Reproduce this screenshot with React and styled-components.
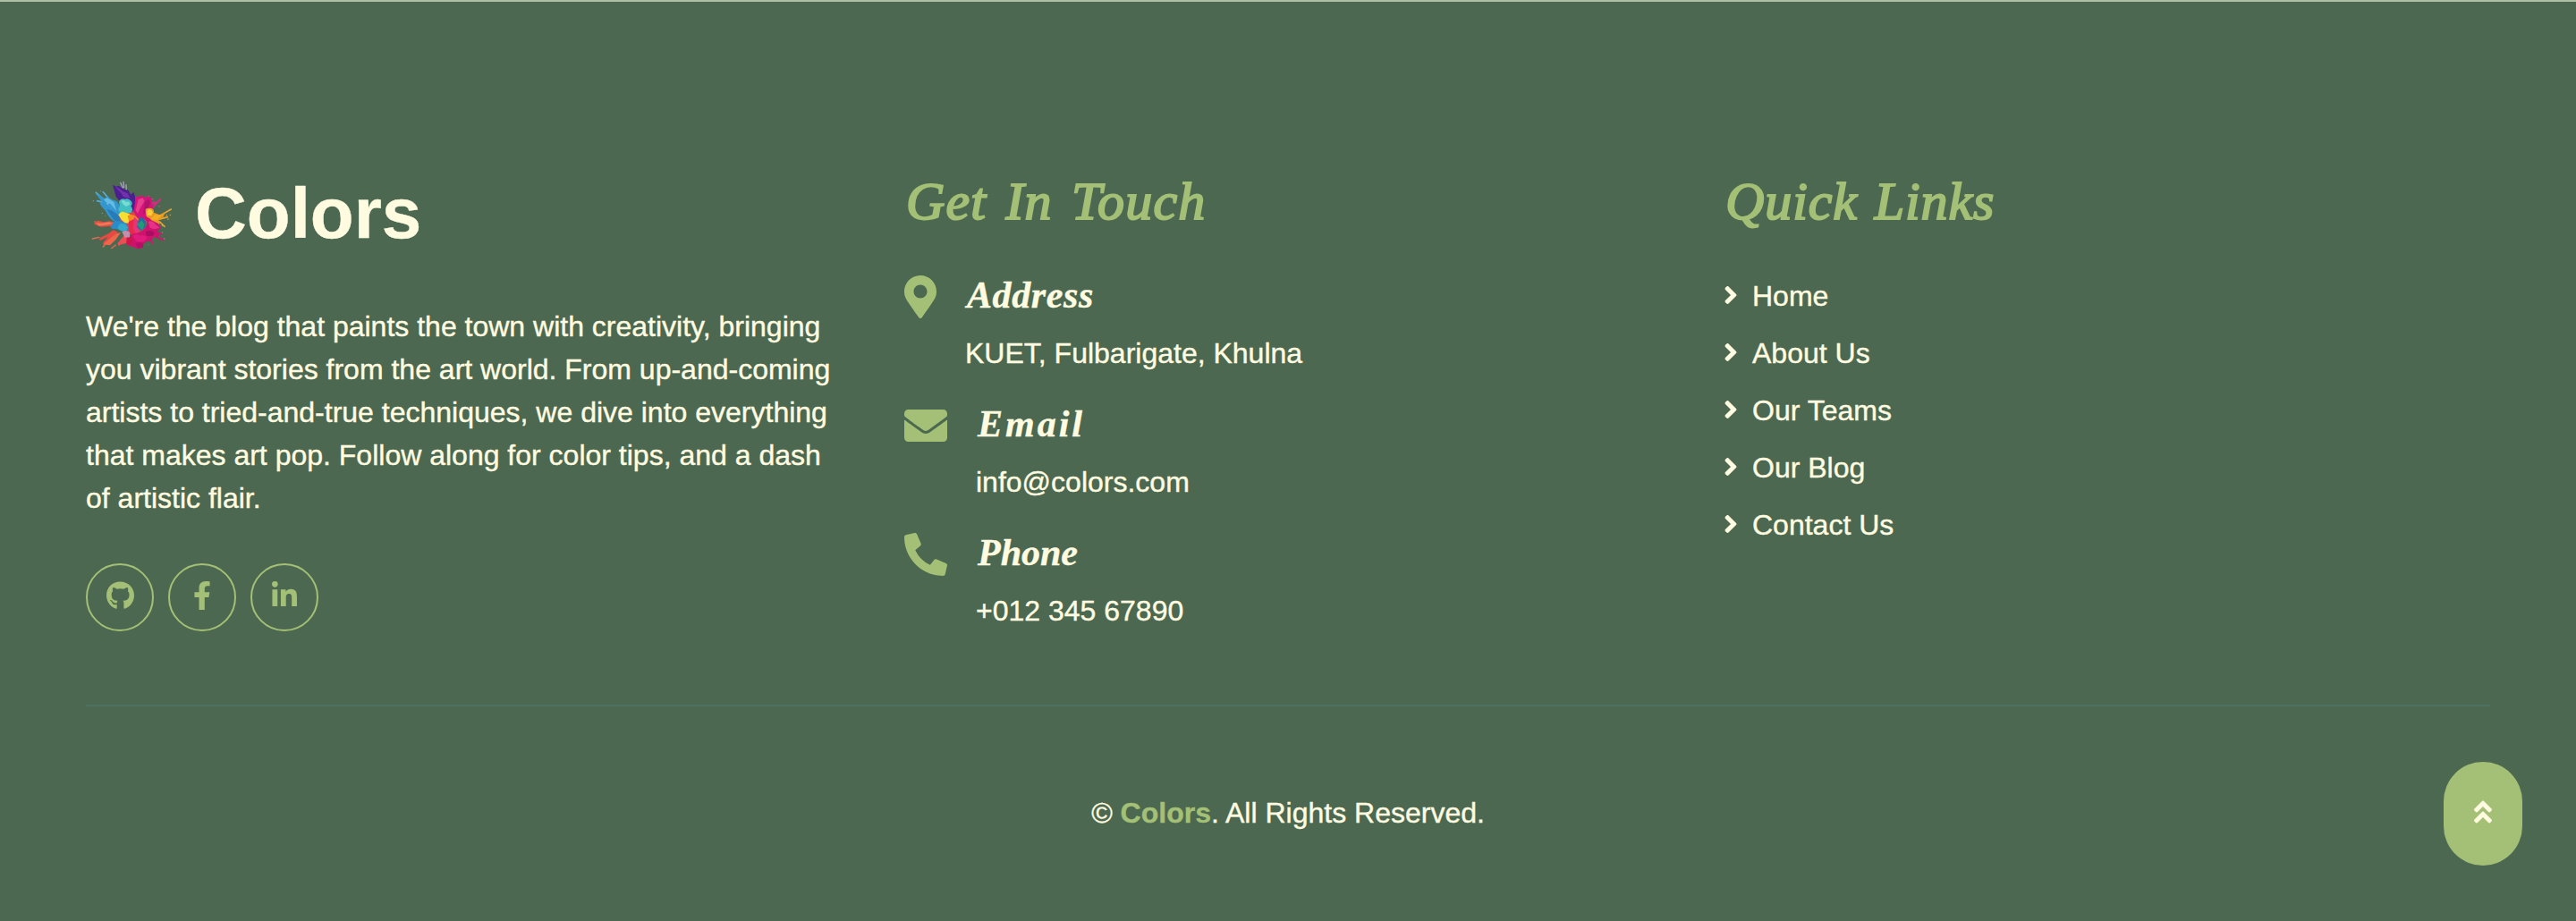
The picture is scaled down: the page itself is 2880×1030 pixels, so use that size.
import React from "react";
import styled, { createGlobalStyle } from "styled-components";
import {
  FaGithub,
  FaFacebookF,
  FaLinkedinIn,
  FaMapMarkerAlt,
  FaEnvelope,
  FaPhoneAlt,
  FaAngleRight,
  FaAngleDoubleUp,
} from "react-icons/fa";

const colors = {
  background: "#4c6850",
  cream: "#fefbe0",
  accent: "#a3c076",
  rule: "#4d7063",
  edge: "#adbfa5",
};

const GlobalStyle = createGlobalStyle`
  * { box-sizing: border-box; }
  body {
    margin: 0;
    background: ${colors.background};
    color: ${colors.cream};
    font: 32px/48px "Liberation Sans", Arial, sans-serif;
    -webkit-text-stroke: 0.4px currentColor;
  }
  h2, h3, p, ul { margin: 0; padding: 0; }
  a { color: inherit; text-decoration: none; }
  svg { display: block; flex: none; }
`;

const Footer = styled.footer`
  height: 1030px;
  padding: 187px 96px 0;
  border-top: 2px solid ${colors.edge};
  overflow: hidden;
`;

const Columns = styled.div`
  display: grid;
  grid-template-columns: 857px 858px 1fr;
  column-gap: 58px;
  height: 599px;
`;

const Brand = styled.a`
  display: flex;
  align-items: center;
  gap: 12px;
  height: 100px;
  margin: 1px 0 51px -6px;
`;

const BrandName = styled.span`
  font-size: 80px;
  font-weight: 700;
  line-height: 96px;
  padding-bottom: 3px;
`;

const Socials = styled.div`
  display: flex;
  gap: 16px;
  margin-top: 49px;
`;

const SocialLink = styled.a`
  display: flex;
  align-items: center;
  justify-content: center;
  width: 76px;
  height: 76px;
  padding-bottom: 4px;
  border: 2px solid ${colors.accent};
  border-radius: 50%;
  color: ${colors.accent};
`;

const Glyph = styled.span`
  flex: none;
  width: ${(p) => p.$width}px;
  height: ${(p) => p.$height || 32}px;

  svg {
    width: 100%;
    height: 100%;
    stroke-width: 0;
  }
`;

const Script = styled.h2`
  font-family: "Lucida Calligraphy", "Apple Chancery", "Liberation Serif", serif;
  font-style: italic;
  font-weight: 400;
  font-size: 60px;
  line-height: 72px;
  padding-left: 2px;
  color: ${colors.accent};
  -webkit-text-stroke: 2px ${colors.accent};
  letter-spacing: ${(p) => p.$tracking}px;
  word-spacing: ${(p) => p.$words}px;
`;

const Contacts = styled.div`
  display: flex;
  flex-direction: column;
  gap: 30px;
  margin-top: 44px;
`;

const Contact = styled.div`
  display: flex;
  gap: 32px;

  ${Glyph} {
    margin-top: 3px;
    color: ${colors.accent};
  }
`;

const ContactTitle = styled.h3`
  font-family: "Lucida Calligraphy", "Apple Chancery", "Liberation Serif", serif;
  font-style: italic;
  font-weight: 700;
  font-size: 42px;
  line-height: 50px;
  margin-bottom: 16px;
  padding-left: 2px;
  letter-spacing: ${(p) => p.$tracking}px;
`;

const Links = styled.ul`
  display: flex;
  flex-direction: column;
  gap: 16px;
  margin-top: 46px;
  list-style: none;
`;

const QuickLink = styled.a`
  display: flex;
  align-items: center;
  gap: 16px;

  ${Glyph} { margin-bottom: 2px; }
`;

const Legal = styled.div`
  padding-top: 95px;
  border-top: 2px solid ${colors.rule};
  text-align: center;

  a {
    color: ${colors.accent};
    font-weight: 700;
  }
`;

const BackToTop = styled.a`
  position: fixed;
  right: 60px;
  bottom: 62px;
  display: flex;
  align-items: center;
  justify-content: center;
  width: 88px;
  height: 116px;
  padding-bottom: 4px;
  border-radius: 44px;
  background: ${colors.accent};
  color: ${colors.cream};
`;

function Splash() {
  return (
    <svg width="116" height="100" viewBox="0 0 348 300" aria-hidden="true">
      <g fill="none" strokeLinecap="round">
        <path d="M52 76 L82 102 M76 74 L98 100 M56 104 L80 110" stroke="#58aed4" strokeWidth="5" />
        <path d="M134 43 L142 60 M144 40 L146 58 M153 50 L154 68" stroke="#a9a4bd" strokeWidth="4" />
        <path d="M232 114 L250 108 M242 120 L266 102 M238 130 L268 98" stroke="#d52c83" strokeWidth="6" />
        <path d="M262 156 L304 132 M262 166 L292 158 M266 174 L282 190" stroke="#e7a232" strokeWidth="5" />
        <path d="M246 220 L276 234 M244 210 L270 214 M234 234 L242 246" stroke="#ce176e" strokeWidth="6" />
        <path d="M40 231 L62 226 M48 173 L66 186 M76 258 L86 246 M118 252 L104 263" stroke="#e36d55" strokeWidth="4" />
      </g>
      <path d="M108 50 L120 56 128 53 143 64 160 68 169 83 178 74 183 89 185 128 172 141 144 122 128 101 119 90z" fill="#4c1f91" />
      <path d="M116 57 L135 76 144 91 167 95 158 79 141 71 127 60z" fill="#7133aa" />
      <path d="M50 79 L66 86 78 96 89 90 105 99 121 105 133 122 139 145 148 177 128 179 106 169 93 154 82 135 70 122 64 111 74 110z" fill="#3396cf" />
      <path d="M63 83 L91 113 118 149 101 125 84 112 100 114 121 139 112 108 90 94 78 99z" fill="#64bce2" />
      <path d="M88 132 L107 137 137 159 131 179 111 167z" fill="#287bb9" />
      <path d="M129 150 L160 140 205 140 225 165 215 205 170 215 145 205z" fill="#d8434f" />
      <path d="M186 91 L207 86 219 94 224 87 240 96 238 118 247 119 237 137 224 145 219 167 191 162 178 139z" fill="#d51479" />
      <path d="M194 99 L209 94 214 105 200 129 192 146 185 136z" fill="#e53f91" />
      <path d="M216 107 L228 98 234 108 226 133 210 149z" fill="#ae146a" />
      <path d="M129 105 Q137 93 148 98 Q160 94 168 103 Q178 112 169 122 Q179 132 170 143 L158 146 143 140 133 143 126 131 132 123z" fill="#42bfc0" />
      <path d="M136 105 Q146 97 153 108 Q166 102 165 116 L153 123 144 116z" fill="#77ddd2" />
      <path d="M218 137 Q216 127 231 128 Q247 127 246 143 L266 151 285 142 277 159 261 165 267 180 253 187 231 173 220 153z" fill="#e89924" />
      <path d="M223 139 Q231 124 243 141 L239 153 224 153z" fill="#f6cd35" />
      <path d="M248 151 L273 151 258 168 236 166z" fill="#f3ad22" />
      <path d="M46 176 L58 170 79 175 96 172 120 176 136 187 124 196 96 189 71 191 48 184z" fill="#df5140" />
      <path d="M52 178 L73 179 95 175 112 181 92 184 61 188z" fill="#f1765a" />
      <path d="M61 230 L95 213 110 202 126 209 110 223 92 237 77 255 76 244 93 224 66 237z" fill="#e84942" />
      <path d="M76 250 L98 231 120 214 135 210 119 233 99 253z" fill="#ef674b" />
      <path d="M124 247 L146 220 164 222 153 246 137 250 128 255z" fill="#eb4d54" />
      <path d="M111 174 L132 172 156 178 159 204 139 206 121 198 108 199 101 192z" fill="#278cc8" />
      <path d="M132 181 Q150 177 159 193 L153 205 136 204 124 195z" fill="#35a9ca" />
      <path d="M127 151 Q135 137 146 141 L164 148 178 158 166 179 149 178 137 167z" fill="#f4df32" />
      <path d="M158 154 Q174 145 188 158 L200 172 189 194 166 186z" fill="#f58a22" />
      <path d="M161 174 L181 164 201 173 209 190 197 209 178 223 164 210z" fill="#e7294c" />
      <path d="M180 157 L194 171 202 202 188 216 176 198z" fill="#e6347a" />
      <path d="M196 160 Q211 158 218 172 L218 193 203 205 190 192z" fill="#246ba4" />
      <path d="M190 184 L205 169 215 183 207 203z" fill="#239a77" />
      <path d="M215 158 Q226 156 238 169 L261 180 269 194 257 206 267 215 258 226 245 225 236 240 223 239 209 250 210 261 190 264 173 257 155 252 160 228 174 215 199 210 219 194 225 181z" fill="#ce126d" />
      <path d="M227 173 Q245 169 251 183 L266 194 248 199 233 194z" fill="#e63286" />
      <path d="M174 221 Q187 211 198 220 Q216 216 223 226 L214 240 190 242z" fill="#e11b7b" />
      <path d="M218 207 Q240 198 248 213 L242 222 222 222z" fill="#a70f62" />
      <path d="M155 225 L171 220 176 233 169 251 154 249z" fill="#cc164b" />
      <path d="M184 247 Q197 238 211 248 L209 260 193 263z" fill="#b90e65" />
      <path d="M139 208 Q154 199 166 210 L165 226 149 227z" fill="#bd91ae" />
      <g fill="#e8bd52">
        <circle cx="289" cy="152" r="2" /><circle cx="301" cy="151" r="2" />
        <circle cx="294" cy="165" r="2" /><circle cx="274" cy="186" r="2" />
      </g>
      <g fill="#d66a91">
        <circle cx="241" cy="98" r="2" /><circle cx="229" cy="88" r="1.5" />
        <circle cx="264" cy="122" r="2" /><circle cx="274" cy="210" r="2" />
        <circle cx="281" cy="231" r="2.5" /><circle cx="228" cy="251" r="1.5" />
      </g>
      <g fill="#78a8ba">
        <circle cx="43" cy="104" r="2" /><circle cx="73" cy="145" r="2" />
        <circle cx="83" cy="154" r="1.5" /><circle cx="68" cy="71" r="1.5" />
      </g>
    </svg>
  );
}

const socials = [
  { label: "GitHub", Icon: FaGithub, width: 31 },
  { label: "Facebook", Icon: FaFacebookF, width: 20 },
  { label: "LinkedIn", Icon: FaLinkedinIn, width: 28 },
];

const contacts = [
  { title: "Address", value: "KUET, Fulbarigate, Khulna", Icon: FaMapMarkerAlt, width: 36, tracking: 0.6 },
  { title: "Email", value: "info@colors.com", Icon: FaEnvelope, width: 48, tracking: 3 },
  { title: "Phone", value: "+012 345 67890", Icon: FaPhoneAlt, width: 48, tracking: 0 },
];

const links = ["Home", "About Us", "Our Teams", "Our Blog", "Contact Us"];

export default function App() {
  return (
    <>
      <GlobalStyle />
      <Footer>
        <Columns>
          <section>
            <Brand href="#">
              <Splash />
              <BrandName>Colors</BrandName>
            </Brand>
            <p>
              We're the blog that paints the town with creativity, bringing you vibrant
              stories from the art world. From up-and-coming artists to tried-and-true
              techniques, we dive into everything that makes art pop. Follow along for
              color tips, and a dash of artistic flair.
            </p>
            <Socials>
              {socials.map(({ label, Icon, width }) => (
                <SocialLink key={label} href="#" aria-label={label}>
                  <Glyph $width={width}><Icon /></Glyph>
                </SocialLink>
              ))}
            </Socials>
          </section>
          <section>
            <Script $tracking={1.2} $words={5}>Get In Touch</Script>
            <Contacts>
              {contacts.map(({ title, value, Icon, width, tracking }) => (
                <Contact key={title}>
                  <Glyph $width={width} $height={48}><Icon /></Glyph>
                  <div>
                    <ContactTitle $tracking={tracking}>{title}</ContactTitle>
                    <p>{value}</p>
                  </div>
                </Contact>
              ))}
            </Contacts>
          </section>
          <section>
            <Script $tracking={0.9} $words={3}>Quick Links</Script>
            <Links>
              {links.map((label) => (
                <li key={label}>
                  <QuickLink href="#">
                    <Glyph $width={16}><FaAngleRight /></Glyph>
                    {label}
                  </QuickLink>
                </li>
              ))}
            </Links>
          </section>
        </Columns>
        <Legal>
          © <a href="#">Colors</a>. All Rights Reserved.
        </Legal>
      </Footer>
      <BackToTop href="#" aria-label="Back to top">
        <Glyph $width={28}><FaAngleDoubleUp /></Glyph>
      </BackToTop>
    </>
  );
}
